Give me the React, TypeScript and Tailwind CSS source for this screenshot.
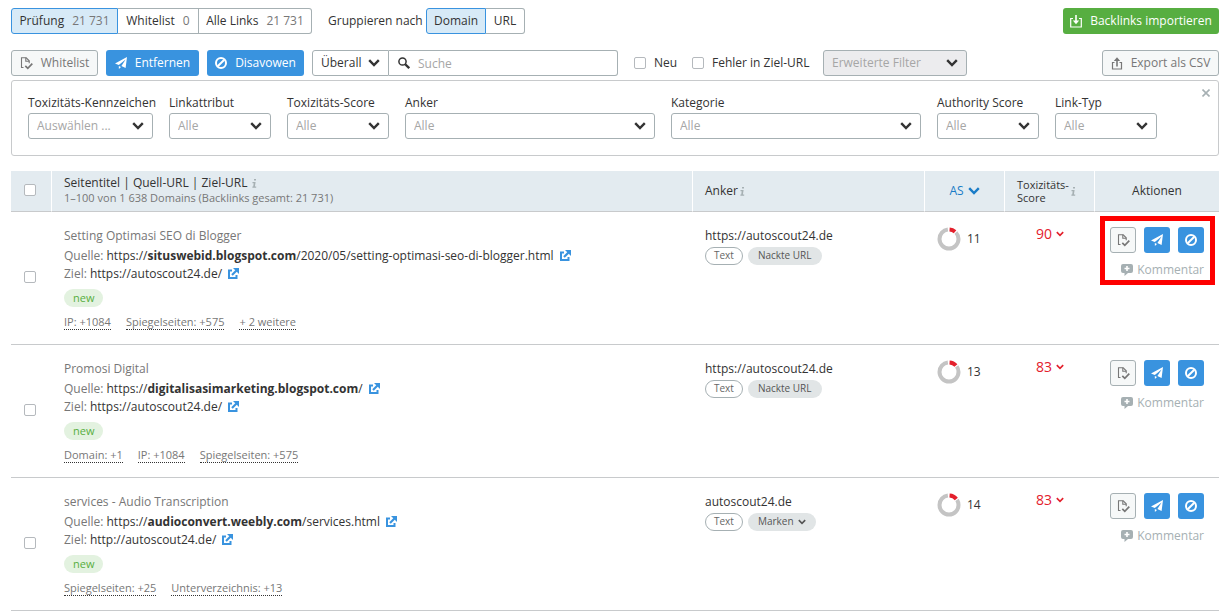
import type { ReactNode } from "react";

type Tone = { className?: string };

const Chevron = ({ className = "" }: Tone) => (
  <svg viewBox="0 0 12 8" className={className} fill="none" stroke="currentColor" strokeWidth="2.4" aria-hidden="true">
    <path d="M1.2 1.2 6 6l4.800-4.800" />
  </svg>
);

const FileCheck = ({ className = "" }: Tone) => (
  <svg viewBox="0 0 13 13" className={className} fill="none" stroke="currentColor" aria-hidden="true">
    <path d="M3.500 10.500H1.500V.8h4.700l3 3v2.400" strokeWidth="1.100" />
    <path d="M5.800.8v3.400h3.400" strokeWidth="1.100" />
    <path d="M5.300 8.800 7.800 11.300 12.300 6.600" strokeWidth="1.700" />
  </svg>
);

const Plane = ({ className = "" }: Tone) => (
  <svg viewBox="0 0 12 12" className={className} fill="currentColor" aria-hidden="true">
    <path d="M12 0 10.600 11 6.400 9.100 10.600 2.500 3.800 8 0 6.500Z" />
    <path d="M3.800 8.900 6 9.900 3.900 12Z" />
  </svg>
);

const Ban = ({ className = "" }: Tone) => (
  <svg viewBox="0 0 12 12" className={className} fill="none" stroke="currentColor" strokeWidth="2" aria-hidden="true">
    <circle cx="6" cy="6" r="5" />
    <path d="M2.700 9.300 9.300 2.700" />
  </svg>
);

const Download = ({ className = "" }: Tone) => (
  <svg viewBox="0 0 12 13" className={className} fill="none" stroke="currentColor" aria-hidden="true">
    <path d="M3 3.500H.7v8.500h10.600V3.500H9" strokeWidth="1.200" />
    <path d="M6 0v6" strokeWidth="1.600" />
    <path d="M2.800 5.500h6.400L6 9.300Z" fill="currentColor" stroke="none" />
  </svg>
);

const Upload = ({ className = "" }: Tone) => (
  <svg viewBox="0 0 12 13" className={className} fill="none" stroke="currentColor" aria-hidden="true">
    <path d="M3.500 5.500H1.500v6.500h9V5.500h-2" strokeWidth="1.200" />
    <path d="M6 9.500V3" strokeWidth="1.600" />
    <path d="M2.800 4h6.400L6 .3Z" fill="currentColor" stroke="none" />
  </svg>
);

const Search = ({ className = "" }: Tone) => (
  <svg viewBox="0 0 12 12" className={className} fill="none" stroke="currentColor" aria-hidden="true">
    <circle cx="4.500" cy="4.500" r="3.600" strokeWidth="1.500" />
    <path d="m7.200 7.200 4 4" strokeWidth="2.300" />
  </svg>
);

const External = ({ className = "" }: Tone) => (
  <svg viewBox="0 0 11 11" className={className} fill="none" stroke="currentColor" aria-hidden="true">
    <path d="M4 2.500H1V10h7.500V7" strokeWidth="2" />
    <path d="M4 7l5-5" strokeWidth="2.200" />
    <path d="M5 0h6v6Z" fill="currentColor" stroke="none" />
  </svg>
);

const Info = ({ className = "" }: Tone) => (
  <svg viewBox="0 0 5 9" className={className} fill="currentColor" aria-hidden="true">
    <path d="M2 0h2v1.600H2ZM.5 3H3.600L2.900 7.500H4.200V8.700H.4V7.500H1.200L1.700 4.200H.5Z" />
  </svg>
);

const Comment = ({ className = "" }: Tone) => (
  <svg viewBox="0 0 12 12" className={className} fill="currentColor" aria-hidden="true">
    <path
      fillRule="evenodd"
      d="M2 0h8a2 2 0 0 1 2 2v5a2 2 0 0 1-2 2H7l-3.500 3V9H2a2 2 0 0 1-2-2V2a2 2 0 0 1 2-2Zm3.200 2v1.700H3.500v1.600h1.700V7h1.600V5.300h1.700V3.700H6.800V2Z"
    />
  </svg>
);

const Donut = ({ value }: { value: number }) => (
  <svg viewBox="0 0 24 24" className="size-6 shrink-0" fill="none" strokeWidth="4" aria-hidden="true">
    <g transform="rotate(-90 12 12)">
      <circle cx="12" cy="12" r="9.500" stroke="#c4c4c4" pathLength="100" strokeDasharray={`${96 - value} 100`} strokeDashoffset={-(value + 2)} />
      <circle cx="12" cy="12" r="9.500" stroke="#e3202c" pathLength="100" strokeDasharray={`${value - 1} 100`} strokeDashoffset="-1" />
    </g>
  </svg>
);

const Check = ({ label, id }: { label: string; id: string }) => (
  <input
    id={id}
    type="checkbox"
    aria-label={label}
    className="block size-3 shrink-0 appearance-none rounded-xs border border-[#b5b9bd] bg-white checked:bg-[#3993df]"
  />
);

function Segments({ items }: { items: { label: string; count?: string; width: string }[] }) {
  return (
    <div className="flex">
      {items.map((item, i) => (
        <button
          key={item.label}
          type="button"
          aria-pressed={i === 0}
          className={`flex h-[26px] items-center justify-center gap-2 border whitespace-nowrap first:rounded-l-[3px] last:rounded-r-[3px] ${item.width} ${
            i === 0 ? "border-[#3993df] bg-[#d7eaf7]" : "border-l-0 border-[#a6b0b3] bg-white"
          }`}
        >
          {item.label}
          {item.count && <span className="text-[#777]">{item.count}</span>}
        </button>
      ))}
    </div>
  );
}

function Filter({ id, label, value, width }: { id: string; label: string; value: string; width: string }) {
  return (
    <div className={`flex flex-col ${width}`}>
      <label htmlFor={id} className="leading-5 whitespace-nowrap">
        {label}
      </label>
      <div className="relative">
        <select id={id} className="block h-[26px] w-full appearance-none rounded-[3px] border border-[#a6b0b3] bg-white px-2 text-[#a6a6a6]">
          <option>{value}</option>
        </select>
        <Chevron className="pointer-events-none absolute top-[9px] right-[9px] h-2 w-3" />
      </div>
    </div>
  );
}

const filters = [
  { id: "flag", label: "Toxizitäts-Kennzeichen", value: "Auswählen ...", width: "w-[125px]" },
  { id: "attr", label: "Linkattribut", value: "Alle", width: "w-[102px]" },
  { id: "tox", label: "Toxizitäts-Score", value: "Alle", width: "w-[102px]" },
  { id: "anchor", label: "Anker", value: "Alle", width: "flex-1" },
  { id: "category", label: "Kategorie", value: "Alle", width: "flex-1" },
  { id: "authority", label: "Authority Score", value: "Alle", width: "w-[102px]" },
  { id: "type", label: "Link-Typ", value: "Alle", width: "w-[102px]" },
];

type Row = {
  title: string;
  domain: string;
  path: string;
  target: string;
  links: string[];
  anchor: string;
  tag: string;
  tagMenu?: boolean;
  as: number;
  tox: number;
  marked?: boolean;
};

const rows: Row[] = [
  {
    title: "Setting Optimasi SEO di Blogger",
    domain: "situswebid.blogspot.com",
    path: "/2020/05/setting-optimasi-seo-di-blogger.html",
    target: "https://autoscout24.de/",
    links: ["IP: +1084", "Spiegelseiten: +575", "+ 2 weitere"],
    anchor: "https://autoscout24.de",
    tag: "Nackte URL",
    as: 11,
    tox: 90,
    marked: true,
  },
  {
    title: "Promosi Digital",
    domain: "digitalisasimarketing.blogspot.com",
    path: "/",
    target: "https://autoscout24.de/",
    links: ["Domain: +1", "IP: +1084", "Spiegelseiten: +575"],
    anchor: "https://autoscout24.de",
    tag: "Nackte URL",
    as: 13,
    tox: 83,
  },
  {
    title: "services - Audio Transcription",
    domain: "audioconvert.weebly.com",
    path: "/services.html",
    target: "http://autoscout24.de/",
    links: ["Spiegelseiten: +25", "Unterverzeichnis: +13"],
    anchor: "autoscout24.de",
    tag: "Marken",
    tagMenu: true,
    as: 14,
    tox: 83,
  },
];

const Head = ({ children, className = "" }: { children: ReactNode; className?: string }) => (
  <th scope="col" className={`h-[41px] border-r border-b border-r-white border-b-[#c8cacc] bg-[#e3ebf0] py-0 font-normal last:border-r-0 ${className}`}>
    {children}
  </th>
);

function LinkRow({ row, index }: { row: Row; index: number }) {
  return (
    <tr className="align-top">
      <td className="h-[133px] pb-0.5 pl-[13px] align-middle">
        <Check id={`row-${index}`} label={row.title} />
      </td>
      <td className="pt-3.5 pl-3 whitespace-nowrap">
        <div className="h-[21px] leading-5 text-[#777]">{row.title}</div>
        <div className="flex items-center leading-[18px]">
          <span className="text-[#777]">Quelle:&nbsp;</span>
          <a href={`https://${row.domain}${row.path}`}>
            https://<b>{row.domain}</b>
            {row.path}
          </a>
          <External className="mb-0.5 ml-1.5 size-[11px] text-[#3993df]" />
        </div>
        <div className="flex items-center leading-[18px]">
          <span className="text-[#777]">Ziel:&nbsp;</span>
          <a href={row.target}>{row.target}</a>
          <External className="mb-0.5 ml-1.5 size-[11px] text-[#3993df]" />
        </div>
        <div className="mt-1.5 flex">
          <span className="rounded-full bg-[#e3f2e0] px-[9px] text-[11px] leading-[18px] text-[#57ae41]">new</span>
        </div>
        <div className="mt-2 flex gap-[15px] text-[11px] leading-[14px] text-[#777]">
          {row.links.map((l) => (
            <a key={l} href="#" className="border-b border-dotted border-[#333]">
              {l}
            </a>
          ))}
        </div>
      </td>
      <td className="pt-3.5 pl-3 whitespace-nowrap">
        <a href="#" className="block h-[21px] leading-5">
          {row.anchor}
        </a>
        <div className="flex gap-[5px] text-[10px]">
          <span className="flex h-[18px] items-center rounded-full border border-[#a6b0b3] px-2 text-[#666]">Text</span>
          <span className="flex h-[18px] items-center gap-1 rounded-full bg-[#e1e5e6] px-2.5 text-[#555]">
            {row.tag}
            {row.tagMenu && <Chevron className="h-1.5 w-2" />}
          </span>
        </div>
      </td>
      <td className="pt-[15px] pl-3">
        <div className="flex items-center gap-1.5">
          <Donut value={row.as} />
          {row.as}
        </div>
      </td>
      <td className="pt-3">
        <button type="button" className="mx-auto flex items-center gap-1 text-sm leading-5 text-[#e3202c]">
          {row.tox}
          <Chevron className="h-1.5 w-2" />
        </button>
      </td>
      <td className="relative pt-[15px] pr-[15px]">
        <div className="flex justify-end gap-2">
          <button type="button" aria-label="Whitelist" className="flex size-[26px] items-center justify-center rounded-[3px] border border-[#a6b0b3] bg-[#f6f8f8] text-[#777]">
            <FileCheck className="size-[13px]" />
          </button>
          <button type="button" aria-label="Entfernen" className="flex size-[26px] items-center justify-center rounded-[3px] bg-[#3993df] text-white">
            <Plane className="size-3" />
          </button>
          <button type="button" aria-label="Disavowen" className="flex size-[26px] items-center justify-center rounded-[3px] bg-[#3993df] text-white">
            <Ban className="size-3" />
          </button>
        </div>
        <button type="button" className="mt-[7px] ml-auto flex items-center gap-1 leading-5 text-[#a6b0b3]">
          <Comment className="size-3" />
          Kommentar
        </button>
        {row.marked && <div className="pointer-events-none absolute top-1 right-1 h-[69px] w-[115px] border-5 border-[#fe0000]" />}
      </td>
    </tr>
  );
}

export default function App() {
  return (
    <main className="bg-white pt-2 pr-[5px] pl-[11px] font-['Open_Sans','Noto_Sans',sans-serif] text-xs text-[#333]">
      <div className="flex items-center">
        <Segments
          items={[
            { label: "Prüfung", count: "21 731", width: "w-[107px]" },
            { label: "Whitelist", count: "0", width: "w-[81px]" },
            { label: "Alle Links", count: "21 731", width: "w-[113px]" },
          ]}
        />
        <span className="mr-2 ml-4 w-[90px] whitespace-nowrap">Gruppieren nach</span>
        <Segments
          items={[
            { label: "Domain", width: "w-[60px]" },
            { label: "URL", width: "w-[39px]" },
          ]}
        />
        <button type="button" className="ml-auto flex h-[26px] w-[156px] items-center justify-center gap-2 rounded-[3px] bg-[#57ae41] font-medium whitespace-nowrap text-white">
          <Download className="h-[13px] w-3" />
          Backlinks importieren
        </button>
      </div>

      <div className="mt-4 flex items-center gap-2 whitespace-nowrap">
        <button type="button" className="flex h-[26px] w-[87px] items-center justify-center gap-2 rounded-[3px] border border-[#a6b0b3] bg-[#f6f8f8] text-[#777]">
          <FileCheck className="size-[13px]" />
          Whitelist
        </button>
        <button type="button" className="flex h-[26px] w-[93px] items-center justify-center gap-2 rounded-[3px] bg-[#3993df] font-medium text-white">
          <Plane className="size-3" />
          Entfernen
        </button>
        <button type="button" className="flex h-[26px] w-[97px] items-center justify-center gap-2 rounded-[3px] bg-[#3993df] font-medium text-white">
          <Ban className="size-3" />
          Disavowen
        </button>
        <div className="flex">
          <div className="relative">
            <select aria-label="Suchbereich" className="block h-[26px] w-[77px] appearance-none rounded-l-[3px] border border-[#a6b0b3] bg-white px-2">
              <option>Überall</option>
            </select>
            <Chevron className="pointer-events-none absolute top-[9px] right-[9px] h-2 w-3" />
          </div>
          <div className="relative">
            <input
              type="search"
              aria-label="Suche"
              placeholder="Suche"
              className="block h-[26px] w-[229px] appearance-none rounded-r-[3px] border border-l-0 border-[#a6b0b3] pl-[29px] placeholder:text-[#a6a6a6]"
            />
            <Search className="pointer-events-none absolute top-[7px] left-[9px] size-3" />
          </div>
        </div>
        <div className="ml-2 flex w-[50px] items-center gap-2">
          <Check id="only-new" label="Neu" />
          <label htmlFor="only-new">Neu</label>
        </div>
        <div className="flex w-[123px] items-center gap-2">
          <Check id="target-error" label="Fehler in Ziel-URL" />
          <label htmlFor="target-error">Fehler in Ziel-URL</label>
        </div>
        <div className="relative">
          <select aria-label="Erweiterte Filter" className="block h-[26px] w-36 appearance-none rounded-[3px] border border-[#a6b0b3] bg-[#ececee] px-2 text-[#a6a6a6]">
            <option>Erweiterte Filter</option>
          </select>
          <Chevron className="pointer-events-none absolute top-[9px] right-[9px] h-2 w-3" />
        </div>
        <button type="button" className="ml-auto flex h-[26px] w-[117px] items-center justify-center gap-2 rounded-[3px] border border-[#a6b0b3] bg-[#f6f8f8] text-[#777]">
          <Upload className="h-[13px] w-3" />
          Export als CSV
        </button>
      </div>

      <section className="relative mt-1 flex gap-4 rounded-[3px] border border-[#c8cacc] pt-3 pr-[61px] pb-4 pl-4">
        {filters.map((f) => (
          <Filter key={f.id} {...f} />
        ))}
        <button type="button" aria-label="Schließen" className="absolute top-2 right-2 text-[#a6b0b3]">
          <svg viewBox="0 0 8 8" className="size-2" fill="none" stroke="currentColor" strokeWidth="1.600" aria-hidden="true">
            <path d="m.5.5 7 7m0-7-7 7" />
          </svg>
        </button>
      </section>

      <table className="mt-[15px] w-full table-fixed border-separate border-spacing-0 [&_td]:border-b [&_td]:border-[#c8cacc]">
        <colgroup>
          <col className="w-[41px]" />
          <col />
          <col className="w-[232px]" />
          <col className="w-20" />
          <col className="w-[90px]" />
          <col className="w-[124px]" />
        </colgroup>
        <thead>
          <tr>
            <Head className="pb-0.5 pl-[13px]">
              <Check id="all" label="Alle auswählen" />
            </Head>
            <Head className="pb-0.5 pl-3 text-left whitespace-nowrap">
              <div className="flex items-center gap-[5px] leading-4">
                Seitentitel | Quell-URL | Ziel-URL
                <Info className="h-[9px] w-[5px] text-[#a6b0b3]" />
              </div>
              <div className="text-[11px] leading-[14px] text-[#777]">1–100 von 1 638 Domains (Backlinks gesamt: 21 731)</div>
            </Head>
            <Head className="pl-3">
              <div className="flex items-center gap-0.5">
                Anker
                <Info className="h-[9px] w-[5px] text-[#a6b0b3]" />
              </div>
            </Head>
            <Head>
              <button type="button" className="mx-auto flex items-center gap-1 text-[#1a7cc7]">
                AS
                <Chevron className="h-2 w-3" />
              </button>
            </Head>
            <Head className="pl-3">
              <div className="flex items-center gap-0.5 text-left text-[11px] leading-[13px]">
                <div>
                  <div>Toxizitäts-</div>
                  <div>Score</div>
                </div>
                <Info className="h-[9px] w-[5px] text-[#a6b0b3]" />
              </div>
            </Head>
            <Head>Aktionen</Head>
          </tr>
        </thead>
        <tbody>
          {rows.map((row, i) => (
            <LinkRow key={row.title} row={row} index={i} />
          ))}
        </tbody>
      </table>
    </main>
  );
}
